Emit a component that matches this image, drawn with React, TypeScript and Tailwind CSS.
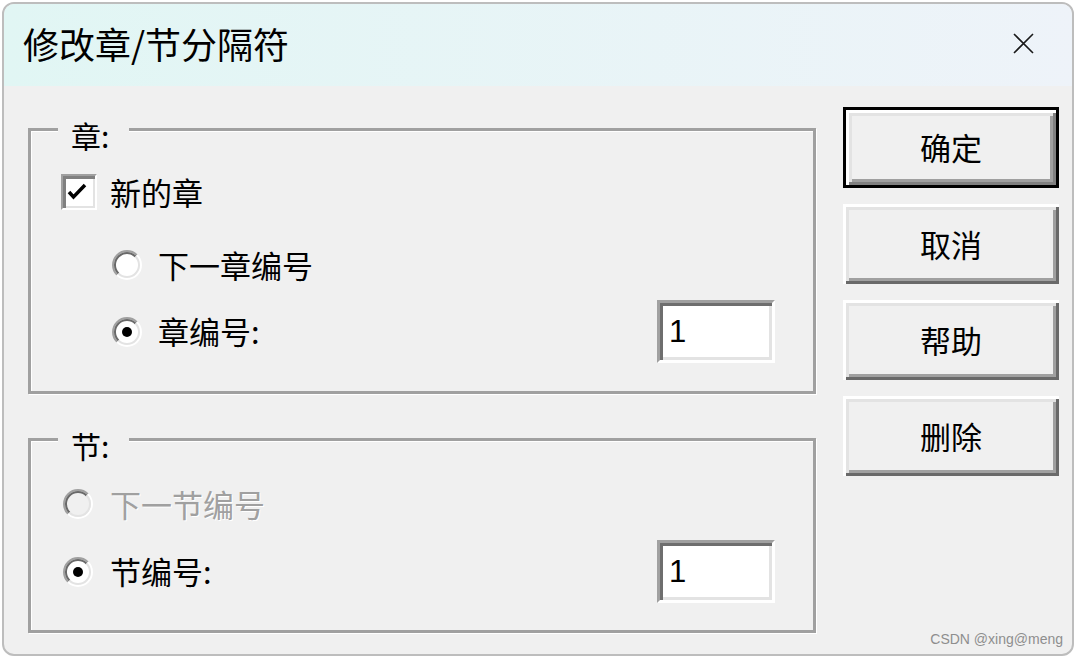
import React from 'react';

const cjk = "font-['Noto_Sans_CJK_SC','Liberation_Sans',sans-serif]";

const Radio = ({ checked, disabled }: { checked?: boolean; disabled?: boolean }) => (
  <svg width="30" height="30" viewBox="0 0 30 30" className="shrink-0">
    <circle cx="15" cy="15" r="14" fill={disabled ? '#f0f0f0' : '#ffffff'} />
    <path d="M5.1 24.9 A14 14 0 0 1 24.9 5.1" fill="none" stroke="#a0a0a0" strokeWidth="2" />
    <path d="M6.5 23.5 A12 12 0 0 1 23.5 6.5" fill="none" stroke="#696969" strokeWidth="2" />
    <path d="M5.1 24.9 A14 14 0 0 0 24.9 5.1" fill="none" stroke="#ffffff" strokeWidth="2" />
    <path d="M6.5 23.5 A12 12 0 0 0 23.5 6.5" fill="none" stroke="#e3e3e3" strokeWidth="2" />
    {checked && <circle cx="15" cy="15" r="5" fill="#000000" />}
  </svg>
);

const Checkbox = () => (
  <div className="w-[36px] h-[36px] shrink-0 bg-white border-2 border-t-[#a0a0a0] border-l-[#a0a0a0] border-b-white border-r-white shadow-[inset_3px_3px_0_#808080,inset_-2px_-2px_0_#e3e3e3]">
    <svg width="32" height="32" viewBox="0 0 32 32">
      <path d="M6 16 L10.5 21 L22 9" fill="none" stroke="#000" strokeWidth="3.5" />
    </svg>
  </div>
);

const NumberBox = () => (
  <div className="ml-auto mr-[38px] w-[118px] h-[63px] bg-white border-[3px] border-t-[#a0a0a0] border-l-[#a0a0a0] border-b-white border-r-white shadow-[inset_3px_3px_0_#6e6e6e,inset_-3px_-3px_0_#e3e3e3] flex items-center pl-[9px] pt-[2px] font-['Liberation_Sans',sans-serif] text-[31px] text-black">
    1
  </div>
);

const Legend = ({ label }: { label: string }) => (
  <span className="absolute left-[27px] top-[-14px] h-[36px] leading-[36px] w-[71px] pl-[13px] bg-[#f0f0f0] text-[30px] text-black">
    {label}
  </span>
);

const Button = ({ label, primary }: { label: string; primary?: boolean }) => (
  <button
    className={
      primary
        ? 'w-[216px] h-[81px] border-[3px] border-black bg-[#f0f0f0] shadow-[inset_3px_3px_0_#ffffff,inset_-3px_-3px_0_#808080,inset_6px_6px_0_#e3e3e3,inset_-6px_-6px_0_#a0a0a0] text-[31px] text-black'
        : 'w-[216px] h-[80px] bg-[#f0f0f0] shadow-[inset_3px_3px_0_#ffffff,inset_-3px_-3px_0_#696969,inset_6px_6px_0_#e3e3e3,inset_-6px_-6px_0_#a0a0a0] text-[31px] text-black'
    }
  >
    {label}
  </button>
);

export default function App() {
  return (
    <div className={`w-[1077px] h-[659px] bg-white pt-[2px] pl-[2px] overflow-hidden ${cjk}`}>
      <div className="relative w-[1072px] h-[654px] rounded-[12px] border-2 border-[#bdbdbd] bg-[#f0f0f0] overflow-hidden flex flex-col">
        {/* Title bar */}
        <div className="h-[82px] shrink-0 flex items-center justify-between bg-gradient-to-r from-[#e1f6f4] to-[#eef3f9] pl-[19px] pr-[38px]">
          <span className="text-[36px] text-black leading-none pb-[4px]">修改章/节分隔符</span>
          <svg width="21" height="21" viewBox="0 0 21 21" className="mb-[3px]">
            <path d="M1 1 L20 20 M20 1 L1 20" stroke="#1a1a1a" strokeWidth="1.6" />
          </svg>
        </div>

        {/* Body */}
        <div className="flex flex-1">
          <div className="pl-[24px] pt-[42px] flex flex-col">
            {/* 章 group */}
            <div className="relative w-[788px] h-[266px] border-[3px] border-[#a0a0a0] shadow-[1px_1px_0_#ffffff,inset_1px_1px_0_#ffffff] flex flex-col">
              <Legend label="章:" />
              <div className="mt-[43px] ml-[30px] h-[36px] flex items-center gap-[13px]">
                <Checkbox />
                <span className="text-[31px] text-black">新的章</span>
              </div>
              <div className="mt-[37px] ml-[81px] h-[36px] flex items-center gap-[16px]">
                <Radio />
                <span className="text-[31px] text-black">下一章编号</span>
              </div>
              <div className="mt-[17px] ml-[81px] h-[63px] flex items-center gap-[16px]">
                <Radio checked />
                <span className="text-[31px] text-black">章编号:</span>
                <NumberBox />
              </div>
            </div>

            {/* 节 group */}
            <div className="relative mt-[44px] w-[788px] h-[195px] border-[3px] border-[#a0a0a0] shadow-[1px_1px_0_#ffffff,inset_1px_1px_0_#ffffff] flex flex-col">
              <Legend label="节:" />
              <div className="mt-[45px] ml-[32px] h-[36px] flex items-center gap-[17px]">
                <Radio disabled />
                <span className="text-[31px] text-[#a0a0a0] [text-shadow:1px_1px_0_#ffffff]">下一节编号</span>
              </div>
              <div className="mt-[18px] ml-[32px] h-[63px] flex items-center gap-[17px]">
                <Radio checked />
                <span className="text-[31px] text-black">节编号:</span>
                <NumberBox />
              </div>
            </div>
          </div>

          {/* Buttons */}
          <div className="ml-[27px] pt-[21px] flex flex-col gap-[16px]">
            <Button label="确定" primary />
            <Button label="取消" />
            <Button label="帮助" />
            <Button label="删除" />
          </div>
        </div>

        <span className="absolute right-[9px] bottom-[4px] font-['Liberation_Sans',sans-serif] text-[14px] text-[#8e8e8e]">
          CSDN @xing@meng
        </span>
      </div>
    </div>
  );
}
